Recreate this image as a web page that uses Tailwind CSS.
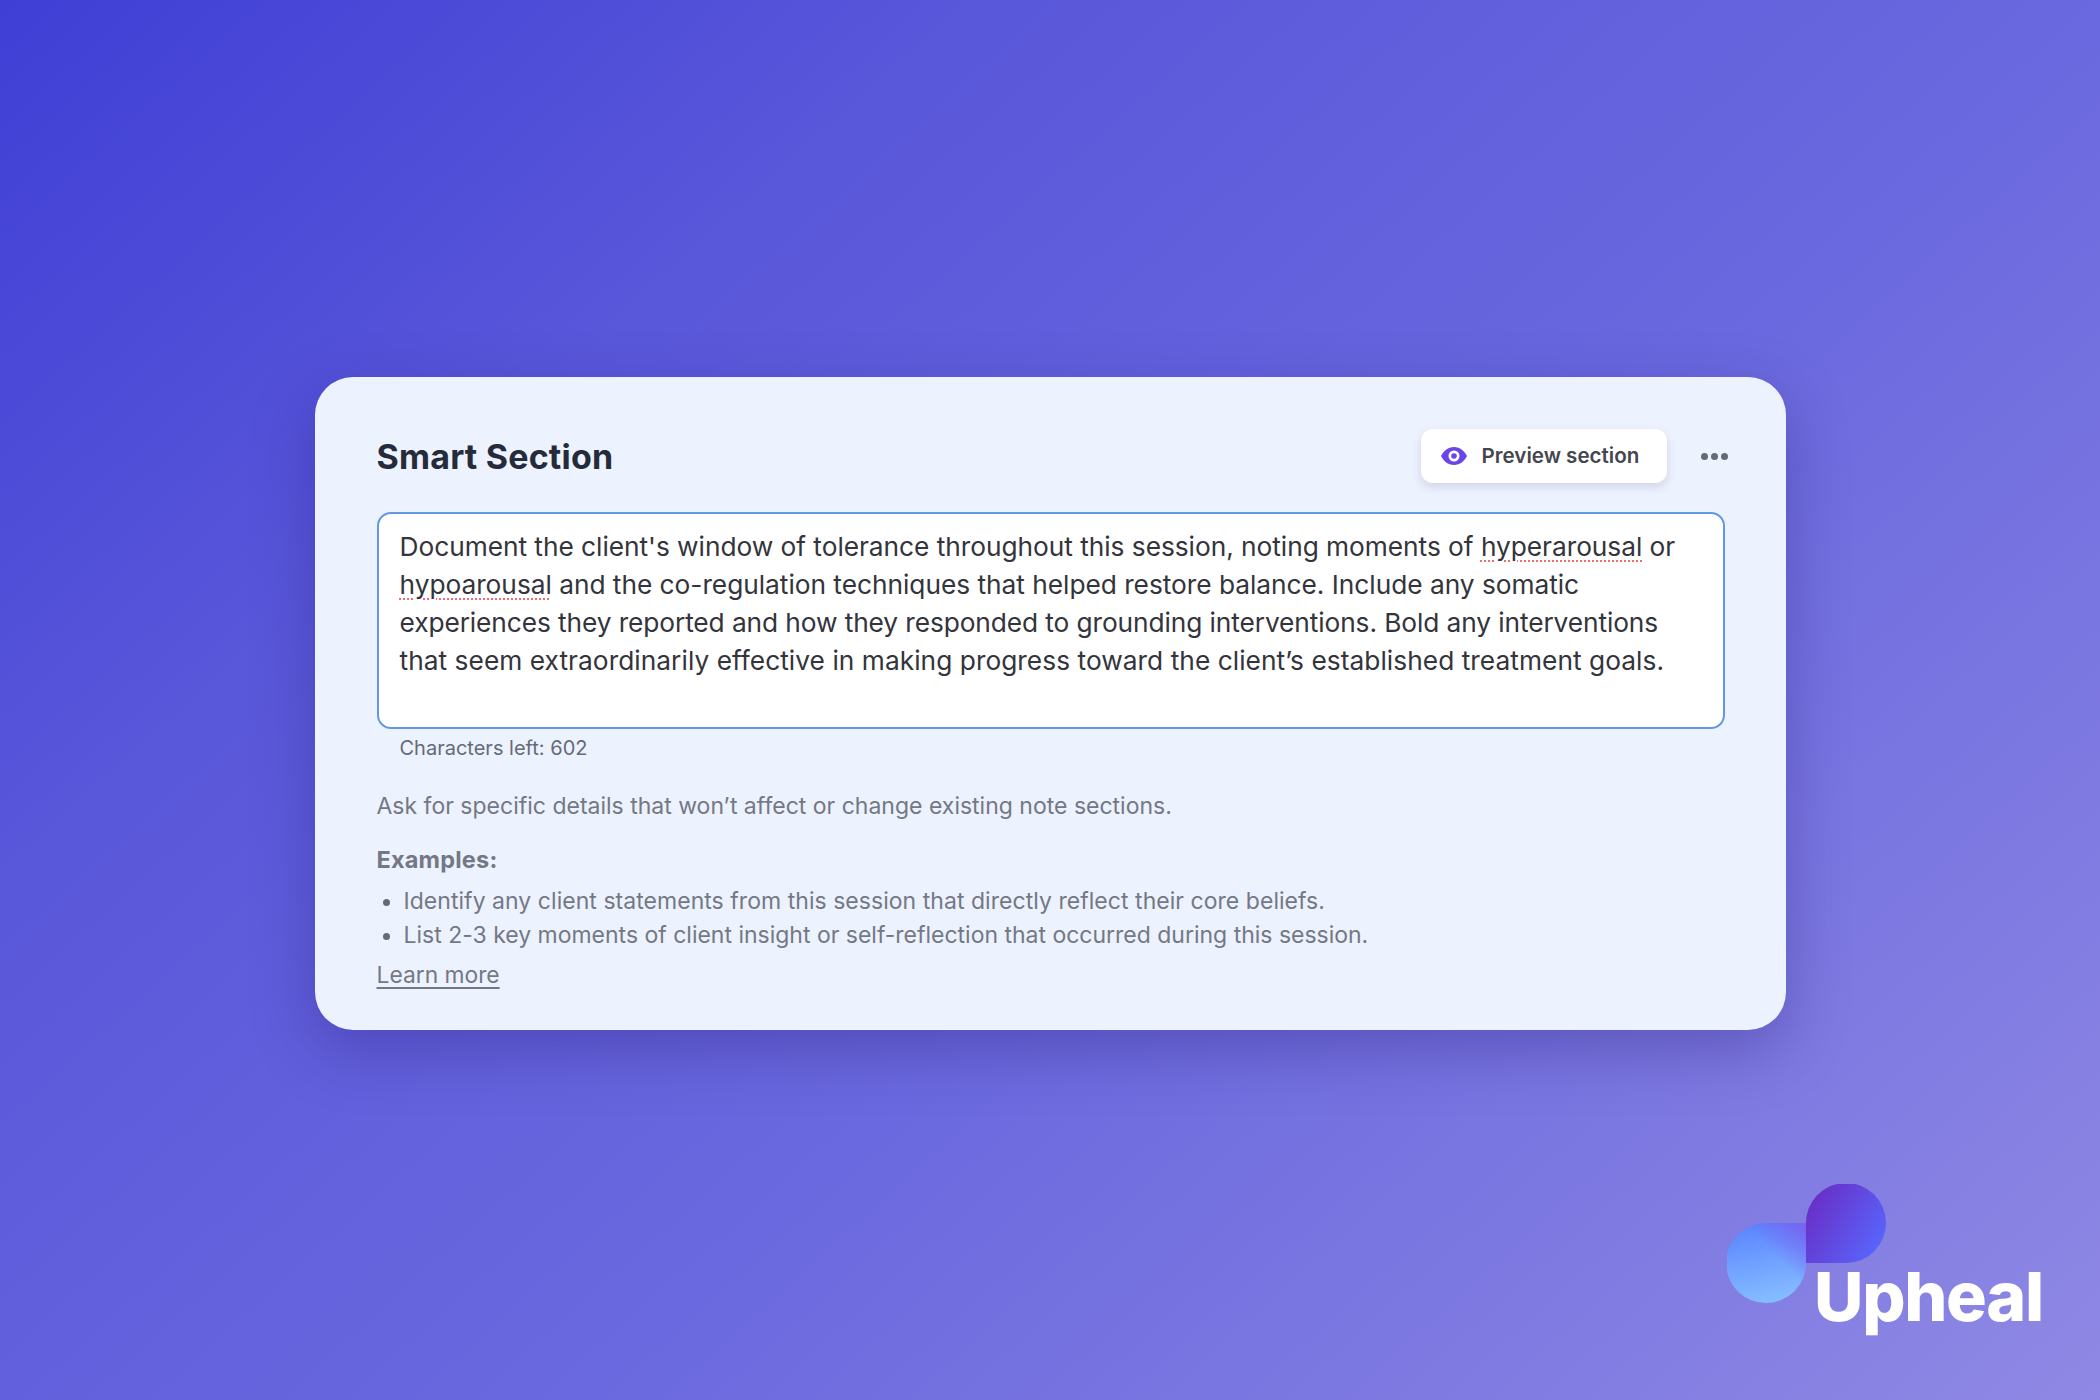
<!DOCTYPE html>
<html lang="en">
<head>
  <meta charset="UTF-8">
  <title>Smart Section</title>
  <script src="https://cdn.jsdelivr.net/npm/@tailwindcss/browser@4"></script>
</head>
<body class="relative w-[2100px] h-[1400px] overflow-hidden flex justify-center pt-[377px] bg-[linear-gradient(138deg,#3f3fd6_0%,#5a58da_28%,#6c6adf_60%,#8f88e4_100%)] font-['Inter',sans-serif]">
  <!-- card -->
  <div class="w-[1471px] h-[653px] rounded-[38px] bg-[#ecf2fe] pl-[62px] pr-[60px] pt-[52px] shadow-[0_20px_60px_rgba(40,30,120,0.35)]">
    <div class="flex items-center justify-between h-[54px]">
      <h1 class="text-[34px] font-bold text-[#252b3a] tracking-[0.2px]">Smart Section</h1>
      <div class="flex items-center mr-[-5px]">
        <button class="flex items-center w-[246px] h-[54px] pl-[20px] rounded-[12px] bg-white shadow-[0_4px_10px_rgba(60,60,130,0.16)]">
          <svg class="w-[26px] h-[18px]" viewBox="0 0 26 18">
            <path fill="#6a45e8" fill-rule="evenodd" d="M13 0C19 0 23.500 4 26 9 23.500 14 19 18 13 18 7 18 2.500 14 0 9 2.500 4 7 0 13 0ZM13 3.500A5.500 5.500 0 1 0 13 14.500 5.500 5.500 0 1 0 13 3.500Z"/>
            <circle cx="13" cy="9" r="2.800" fill="#6a45e8"/>
          </svg>
          <span class="ml-[15px] text-[20.6px] font-semibold text-[#45464f]">Preview section</span>
        </button>
        <div class="flex gap-[3px] ml-[34px] mr-[3px]">
          <span class="w-[7px] h-[7px] rounded-full bg-[#666a78]"></span>
          <span class="w-[7px] h-[7px] rounded-full bg-[#666a78]"></span>
          <span class="w-[7px] h-[7px] rounded-full bg-[#666a78]"></span>
        </div>
      </div>
    </div>

    <div class="mt-[29px] w-[1348px] h-[217px] rounded-[14px] border-2 border-[#6297e6] bg-white pl-[21px] pt-[14px] text-[26.3px] leading-[38px] text-[#33343c]">
      <p class="tracking-[-0.04px]">Document the client's window of tolerance throughout this session, noting moments of <span class="underline decoration-dotted decoration-[#ee6f6f] decoration-2 underline-offset-[4px]">hyperarousal</span> or</p>
      <p class="tracking-[-0.03px]"><span class="underline decoration-dotted decoration-[#ee6f6f] decoration-2 underline-offset-[4px]">hypoarousal</span> and the co-regulation techniques that helped restore balance. Include any somatic</p>
      <p class="tracking-[-0.1px]">experiences they reported and how they responded to grounding interventions. Bold any interventions</p>
      <p class="tracking-[0.04px]">that seem extraordinarily effective in making progress toward the client’s established treatment goals.</p>
    </div>
    <p class="mt-[5px] ml-[23px] text-[20px] leading-[28px] text-[#666a76]">Characters left: 602</p>

    <p class="mt-[29px] text-[23px] leading-[30px] text-[#747885]">Ask for specific details that won’t affect or change existing note sections.</p>
    <p class="mt-[24px] text-[23.500px] leading-[30px] font-bold text-[#747885] tracking-[0.2px]">Examples:</p>
    <ul class="mt-[9px] ml-[27px] list-disc text-[23px] leading-[34px] text-[#747885] marker:text-[#666a76]">
      <li class="tracking-[0.04px]">Identify any client statements from this session that directly reflect their core beliefs.</li>
      <li class="tracking-[-0.01px]">List 2-3 key moments of client insight or self-reflection that occurred during this session.</li>
    </ul>
    <a class="block mt-[7px] w-fit text-[22.800px] leading-[32px] text-[#747885] underline underline-offset-[4px]">Learn more</a>
  </div>

  <!-- logo -->
  <div class="absolute left-[1727px] top-[1184px] w-[320px] h-[160px]">
    <svg class="absolute left-0 top-0" width="160" height="120" viewBox="0 0 160 120">
      <defs>
        <linearGradient id="left-drop" x1="0.300" y1="0" x2="0.500" y2="1">
          <stop offset="0" stop-color="#5a84ff"/>
          <stop offset="1" stop-color="#86bdff"/>
        </linearGradient>
        <linearGradient id="left-tint" x1="0" y1="1" x2="1" y2="0">
          <stop offset="0.600" stop-color="#7a5cf0" stop-opacity="0"/>
          <stop offset="1" stop-color="#7a5cf0" stop-opacity="0.900"/>
        </linearGradient>
        <linearGradient id="right-drop" x1="0" y1="0.200" x2="1" y2="0.800">
          <stop offset="0" stop-color="#6a2cc4"/>
          <stop offset="1" stop-color="#5768ff"/>
        </linearGradient>
      </defs>
      <path fill="url(#left-drop)" d="M79 39V79A40 40 0 1 1 40 39Z"/>
      <path fill="url(#left-tint)" d="M79 39V79A40 40 0 1 1 40 39Z"/>
      <path fill="url(#right-drop)" d="M79 79V40A40 40 0 1 1 119 79Z"/>
    </svg>
    <span class="absolute left-[87px] top-[70px] text-[68px] leading-[84px] font-extrabold tracking-[-1.300px] text-white">Upheal</span>
  </div>
</body>
</html>
